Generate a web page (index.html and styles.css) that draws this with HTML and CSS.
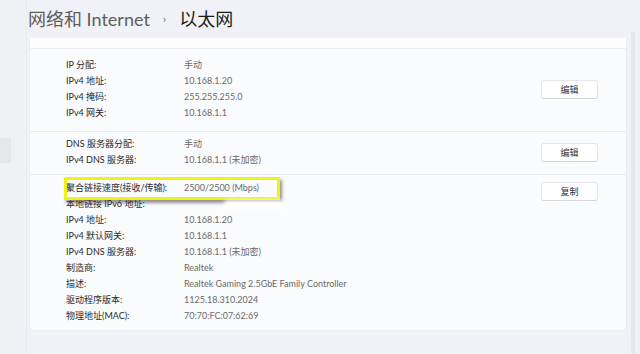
FILE: index.html
```html
<!DOCTYPE html>
<html lang="zh-CN">
<head>
  <meta charset="UTF-8" />
  <title>以太网</title>
  <link rel="stylesheet" href="styles.css">
</head>
<body>

<div class="side">
  <div class="side-item"></div>
</div>

<div class="main">
  <h1 class="title">
    <span class="crumb">网络和 Internet</span>
    <span class="sep">›</span>
    <span class="current">以太网</span>
  </h1>

  <div class="card">
    <div class="card-top"></div>

    <div class="section s1">
      <div class="rows">
        <div class="k">IP 分配:</div><div class="v">手动</div>
        <div class="k">IPv4 地址:</div><div class="v">10.168.1.20</div>
        <div class="k">IPv4 掩码:</div><div class="v">255.255.255.0</div>
        <div class="k">IPv4 网关:</div><div class="v">10.168.1.1</div>
      </div>
      <button class="btn">编辑</button>
    </div>

    <div class="section s2">
      <div class="rows">
        <div class="k">DNS 服务器分配:</div><div class="v">手动</div>
        <div class="k">IPv4 DNS 服务器:</div><div class="v">10.168.1.1 (未加密)</div>
      </div>
      <button class="btn">编辑</button>
    </div>

    <div class="section s3">
      <div class="mark"></div>
      <div class="rows">
        <div class="k">聚合链接速度(接收/传输):</div><div class="v">2500/2500 (Mbps)</div>
        <div class="k">本地链接 IPv6 地址:</div><div class="v"><span class="blur"></span></div>
        <div class="k">IPv4 地址:</div><div class="v">10.168.1.20</div>
        <div class="k">IPv4 默认网关:</div><div class="v">10.168.1.1</div>
        <div class="k">IPv4 DNS 服务器:</div><div class="v">10.168.1.1 (未加密)</div>
        <div class="k">制造商:</div><div class="v">Realtek</div>
        <div class="k">描述:</div><div class="v">Realtek Gaming 2.5GbE Family Controller</div>
        <div class="k">驱动程序版本:</div><div class="v">1125.18.310.2024</div>
        <div class="k">物理地址(MAC):</div><div class="v">70:70:FC:07:62:69</div>
      </div>
      <button class="btn">复制</button>
    </div>
  </div>
</div>

<div class="scroll"></div>

</body>
</html>
```

FILE: styles.css
```css
body { margin: 0; height: 354px; overflow: hidden; display: flex; background-color: #f1f2f7; font-family: Lato, "Noto Sans CJK SC", sans-serif; color: #262626; }

.side { width: 26px; flex: none; border-right: 1px solid #e8eaee; background-color: #eff1f5; }
.side-item { margin-top: 138px; width: 11px; height: 25px; background-color: #e6e7eb; }

.main { width: 600px; flex: none; }
.title { margin: 0; height: 38px; display: flex; align-items: center; gap: 12px; font-size: 18px; font-weight: normal; line-height: 38px; padding-left: 1px; }
.crumb { color: #5e5e5e; }
.sep { color: #7a7a7a; font-size: 12px; margin-left: 1px; }
.current { color: #1c1c1c; margin-left: 1px; }

.card { margin-left: 2px; width: 596px; background-color: #fafbfd; border: 1px solid #ecedf1; border-top: none; border-radius: 0 0 4px 4px; }
.card-top { height: 10px; background-color: #fdfdfe; border-bottom: 1px solid #eceef2; }

.section { position: relative; display: flex; align-items: center; padding: 0 28px 0 36px; border-bottom: 1px solid #e9eaef; }
.section:last-child { border-bottom: none; }
.s1 { padding-top: 8px; padding-bottom: 10px; }
.s2 { padding-top: 4px; padding-bottom: 6px; }
.s3 { padding-top: 5px; padding-bottom: 6px; align-items: flex-start; }
.s3 .btn { margin-top: 2px; }

.rows { flex: 1; display: grid; grid-template-columns: 118px 1fr; font-size: 9px; line-height: 16px; }
.k { color: #2a2a2a; white-space: nowrap; }
.v { color: #6a6a6a; white-space: nowrap; }
.blur { display: inline-block; width: 60px; height: 10px; margin-left: 40px; vertical-align: middle; background-color: #fff; border-radius: 4px; filter: blur(2px); }

.btn { width: 57px; height: 19px; padding: 0; background-color: #fff; border: 1px solid #e6e6e8; border-bottom-color: #d6d6da; border-radius: 3px; font-family: inherit; font-size: 9px; color: #333; }

.mark { position: absolute; left: 34px; top: 2px; width: 210px; height: 17px; border: 3px solid #f1f117; box-shadow: 2px 3px 3px rgba(60, 60, 60, 0.55); }

.scroll { width: 4px; margin: 32px 0 0 4px; background-color: #e5e7eb; }
```
